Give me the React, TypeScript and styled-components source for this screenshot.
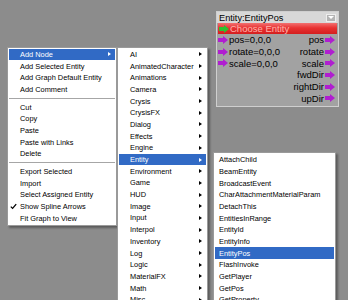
import React from "react";
import styled, { createGlobalStyle } from "styled-components";

const ROW = 11.7;

const GlobalStyle = createGlobalStyle`
  html, body {
    margin: 0;
    padding: 0;
    background: #8c8c8c;
    overflow: hidden;
  }
`;

type MenuEntry =
  | { label: string; sub?: boolean; active?: boolean; checked?: boolean }
  | "sep";

const mainMenu: MenuEntry[] = [
  { label: "Add Node", sub: true, active: true },
  { label: "Add Selected Entity" },
  { label: "Add Graph Default Entity" },
  { label: "Add Comment" },
  "sep",
  { label: "Cut" },
  { label: "Copy" },
  { label: "Paste" },
  { label: "Paste with Links" },
  { label: "Delete" },
  "sep",
  { label: "Export Selected" },
  { label: "Import" },
  { label: "Select Assigned Entity" },
  { label: "Show Spline Arrows", checked: true },
  { label: "Fit Graph to View" },
];

const categories = [
  "AI",
  "AnimatedCharacter",
  "Animations",
  "Camera",
  "Crysis",
  "CrysisFX",
  "Dialog",
  "Effects",
  "Engine",
  "Entity",
  "Environment",
  "Game",
  "HUD",
  "Image",
  "Input",
  "Interpol",
  "Inventory",
  "Log",
  "Logic",
  "MaterialFX",
  "Math",
  "Misc",
];

const entityNodes = [
  "AttachChild",
  "BeamEntity",
  "BroadcastEvent",
  "CharAttachmentMaterialParam",
  "DetachThis",
  "EntitiesInRange",
  "EntityId",
  "EntityInfo",
  "EntityPos",
  "FlashInvoke",
  "GetPlayer",
  "GetPos",
  "GetProperty",
];

const inputs = ["pos=0,0,0", "rotate=0,0,0", "scale=0,0,0"];
const outputs = ["pos", "rotate", "scale", "fwdDir", "rightDir", "upDir"];

const PortArrow = ({ color }: { color: string }) => (
  <svg width="10" height="8" viewBox="0 0 10 8">
    <path d="M0 2 H5 V0 L10 4 L5 8 V6 H0 Z" fill={color} />
  </svg>
);

const Check = () => (
  <svg width="7" height="7" viewBox="0 0 7 7">
    <path d="M0.8 3.6 L2.6 5.4 L6.2 1.2" fill="none" stroke="#000" strokeWidth="1.3" />
  </svg>
);

const Menu = ({
  items,
  left,
  top,
  width,
  gutter,
}: {
  items: MenuEntry[];
  left: number;
  top: number;
  width: number;
  gutter: number;
}) => (
  <MenuBox style={{ left, top, width }}>
    {items.map((item, i) =>
      item === "sep" ? (
        <Separator key={i} />
      ) : (
        <Item key={i} $active={item.active} $gutter={gutter}>
          <CheckSlot>{item.checked && <Check />}</CheckSlot>
          <ItemLabel>{item.label}</ItemLabel>
          {item.sub && <SubArrow $active={item.active} />}
        </Item>
      )
    )}
  </MenuBox>
);

const App: React.FunctionComponent = () => {
  return (
    <Canvas>
      <GlobalStyle />

      <Node>
        <NodeTitle>
          <span>Entity:EntityPos</span>
          <DropButton />
        </NodeTitle>
        <EntityBar>
          <PortArrow color="#2fc02f" />
          <span>Choose Entity</span>
        </EntityBar>
        <Ports>
          <PortColumn>
            {inputs.map((p) => (
              <Port key={p}>
                <PortArrow color="#b01ed0" />
                <span>{p}</span>
              </Port>
            ))}
          </PortColumn>
          <PortColumn $right>
            {outputs.map((p) => (
              <Port key={p}>
                <span>{p}</span>
                <PortArrow color="#b01ed0" />
              </Port>
            ))}
          </PortColumn>
        </Ports>
      </Node>

      <Menu items={mainMenu} left={7} top={47} width={110} gutter={11} />
      <Menu
        items={categories.map((c) => ({ label: c, sub: true, active: c === "Entity" }))}
        left={117}
        top={47}
        width={91}
        gutter={11}
      />
      <Menu
        items={entityNodes.map((n) => ({ label: n, active: n === "EntityPos" }))}
        left={213}
        top={152.3}
        width={123}
        gutter={4}
      />
    </Canvas>
  );
};

export default App;

const Canvas = styled.div`
  position: relative;
  width: 348px;
  height: 300px;
  overflow: hidden;
  background: #8c8c8c;
  font-family: "Liberation Sans", Arial, sans-serif;
`;

const Node = styled.div`
  position: absolute;
  left: 216px;
  top: 11px;
  width: 123px;
  box-sizing: border-box;
  border: 1px solid #cfcfcf;
  background: #a2a2a2;
  padding-bottom: 2px;
  font-size: 9.5px;
  color: #000;
`;

const NodeTitle = styled.div`
  display: flex;
  align-items: center;
  justify-content: space-between;
  height: 11px;
  padding: 0 2px 0 2px;
  background: #d8d8d8;
  font-size: 9.2px;
`;

const DropButton = styled.div`
  width: 10px;
  height: 8px;
  box-sizing: border-box;
  border: 1px solid #eeeeee;
  background: #b4b4b4;
  display: flex;
  align-items: center;
  justify-content: center;

  &::after {
    content: "";
    border-top: 3px solid #ffffff;
    border-left: 3px solid transparent;
    border-right: 3px solid transparent;
  }
`;

const EntityBar = styled.div`
  display: flex;
  align-items: center;
  gap: 1px;
  height: 11px;
  margin: 0 1px;
  padding-left: 1px;
  background: linear-gradient(#f27070 0%, #e83232 45%, #d41e1e 100%);
  color: #ffb3aa;
  font-size: 9.5px;
`;

const Ports = styled.div`
  display: flex;
  justify-content: space-between;
  padding: 0 3px 0 1px;
`;

const PortColumn = styled.div<{ $right?: boolean }>`
  display: flex;
  flex-direction: column;
  align-items: ${(p) => (p.$right ? "flex-end" : "flex-start")};
`;

const Port = styled.div`
  display: flex;
  align-items: center;
  gap: 1px;
  height: ${ROW}px;
  white-space: nowrap;
`;

const MenuBox = styled.div`
  position: absolute;
  box-sizing: border-box;
  border: 1px solid #9a9a9a;
  padding: 0.5px 1px;
  background: #ffffff;
  box-shadow: 2px 2px 2px rgba(0, 0, 0, 0.35);
  font-size: 7.4px;
  color: #000;
`;

const Item = styled.div<{ $active?: boolean; $gutter: number }>`
  display: flex;
  align-items: center;
  height: ${ROW}px;
  padding-right: 4px;
  background: ${(p) => (p.$active ? "#316ac5" : "transparent")};
  color: ${(p) => (p.$active ? "#ffffff" : "#000000")};
  white-space: nowrap;

  & > span:first-child {
    width: ${(p) => p.$gutter}px;
  }
`;

const CheckSlot = styled.span`
  display: flex;
  align-items: center;
  flex-shrink: 0;
  padding-left: 1px;
  box-sizing: border-box;
`;

const ItemLabel = styled.span`
  flex: 1;
`;

const SubArrow = styled.span<{ $active?: boolean }>`
  width: 0;
  height: 0;
  border-left: 3px solid ${(p) => (p.$active ? "#ffffff" : "#000000")};
  border-top: 2.5px solid transparent;
  border-bottom: 2.5px solid transparent;
`;

const Separator = styled.div`
  height: 6px;
  display: flex;
  align-items: center;

  &::after {
    content: "";
    flex: 1;
    height: 1px;
    background: #a6a6a6;
  }
`;
